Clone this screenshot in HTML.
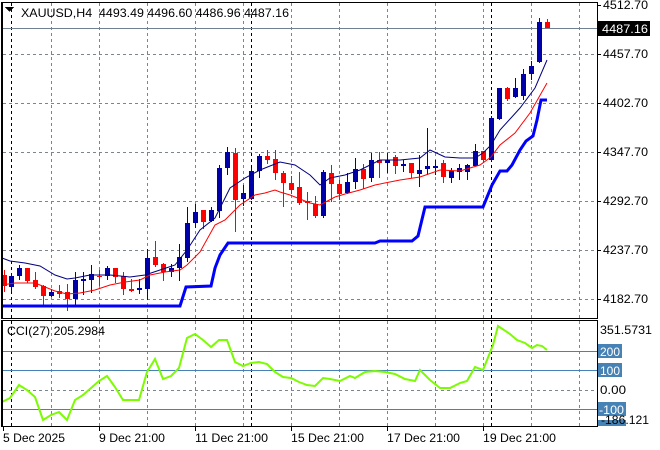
<!DOCTYPE html>
<html><head><meta charset="utf-8"><style>
body{margin:0;width:660px;height:450px;background:#fff;overflow:hidden;font-family:"Liberation Sans",sans-serif}
svg{position:absolute;left:0;top:0}
text{font-family:"Liberation Sans",sans-serif;font-size:12px;fill:#000}
</style></head><body>
<svg id="s" width="660" height="450" xmlns="http://www.w3.org/2000/svg" shape-rendering="crispEdges">
<g id="grid" stroke="#7a8590" stroke-dasharray="3,3" stroke-width="1"></g>
<g stroke="#000" stroke-dasharray="3,3">
<line x1="11.5" y1="3" x2="11.5" y2="426"/><line x1="251.5" y1="3" x2="251.5" y2="426"/><line x1="491.5" y1="3" x2="491.5" y2="426"/>
</g>
<line x1="2" y1="28.5" x2="597" y2="28.5" stroke="#708090"/>
<g stroke="#4682b4"><line x1="2" y1="351.5" x2="597" y2="351.5"/><line x1="2" y1="370.5" x2="597" y2="370.5"/><line x1="2" y1="409.5" x2="597" y2="409.5"/></g>
<g id="c"></g>
<g shape-rendering="auto" fill="none">
<polyline stroke="#000080" stroke-width="1" points="2,258 10,261 25,263 40,266 55,275 67,279 75,278 90,275 110,275 130,277 145,275 160,270 175,265 187,250 200,230 215,218 230,188 245,178 260,170 280,162 295,165 310,175 320,185 330,178 345,175 360,170 380,160 400,160 420,158 430,150 445,157 460,158 475,158 483,153 491,145 500,130 520,108 535,88 547,60"/>
<polyline stroke="#ff0000" stroke-width="1" points="2,285 15,283 35,283 55,291 67,294 80,293 95,290 110,285 125,282 140,280 150,275 165,272 180,270 187,265 200,252 215,225 225,220 240,205 255,195 265,193 275,190 280,192 290,195 310,203 320,205 335,197 345,194 360,190 375,185 400,180 420,177 440,170 460,171 480,165 491,157 500,145 515,133 530,113 547,83"/>
<polyline stroke="#0000ff" stroke-width="3" points="2,306 180,306 186,287 211,286 215,268 220,255 228,243 375,243 380,241 412,241 418,236 425,207 483,207 492,185 500,171 507,171 512,165 520,150 526,141 533,136 537,120 541,100 547,100"/>
<polyline stroke="#7cfc00" stroke-width="2" points="2,402 10,398 19,385 27,390 35,397 43,420 51,415 59,412 67,420 75,400 83,395 91,388 99,381 107,376 115,387 123,400 131,400 139,400 147,372 155,359 163,379 171,376 179,368 187,338 195,334 203,340 211,347 219,340 227,340 235,362 243,366 251,363 259,362 267,364 275,372 283,377 291,378 299,382 307,385 315,386 323,378 330,379 340,381 350,376 355,378 365,372 375,371 385,372 395,374 405,379 415,381 420,370 430,380 440,388 450,388 460,383 467,381 475,367 483,370 493,345 498,326 510,334 517,340 525,343 532,348 537,345 542,346 547,350"/>
</g>
<g stroke="#000" fill="none">
<rect x="2.5" y="2.5" width="595" height="316" stroke-width="1"/>
<line x1="2" y1="2" x2="2" y2="319" stroke-width="2"/>
<rect x="2.5" y="320.5" width="595" height="106"/>
<line x1="2" y1="320" x2="2" y2="427" stroke-width="2"/>
</g>
<g id="ticks" stroke="#000"></g>
<path d="M5 7 L14 7 L9.5 12 Z" fill="#000"/>
<text x="21" y="17" textLength="268" lengthAdjust="spacingAndGlyphs" xml:space="preserve">XAUUSD,H4  4493.49 4496.60 4486.96 4487.16</text>
<text x="7" y="335" textLength="98" lengthAdjust="spacingAndGlyphs">CCI(27) 205.2984</text>
<g id="lab"></g>
<rect x="598" y="21" width="52" height="15" fill="#000"/>
<text x="602" y="33" style="fill:#fff" textLength="46" lengthAdjust="spacingAndGlyphs">4487.16</text>
<text x="600" y="334" textLength="52" lengthAdjust="spacingAndGlyphs">351.5731</text>
<rect x="598" y="344" width="24" height="14" fill="#4682b4"/><text x="600" y="356" style="fill:#fff" textLength="20" lengthAdjust="spacingAndGlyphs">200</text>
<rect x="598" y="363" width="24" height="14" fill="#4682b4"/><text x="600" y="375" style="fill:#fff" textLength="20" lengthAdjust="spacingAndGlyphs">100</text>
<text x="600" y="394" textLength="26" lengthAdjust="spacingAndGlyphs">0.00</text>
<rect x="598" y="420" width="28" height="6" fill="#4682b4"/>
<rect x="598" y="402" width="28" height="14" fill="#4682b4"/><text x="599" y="414" style="fill:#fff" textLength="25" lengthAdjust="spacingAndGlyphs">-100</text>
<text x="601" y="424" textLength="48" lengthAdjust="spacingAndGlyphs">-186.121</text>
<text x="3" y="442" textLength="62" lengthAdjust="spacingAndGlyphs">5 Dec 2025</text>
<text x="99" y="442" textLength="66" lengthAdjust="spacingAndGlyphs">9 Dec 21:00</text>
<text x="195" y="442" textLength="73" lengthAdjust="spacingAndGlyphs">11 Dec 21:00</text>
<text x="291" y="442" textLength="73" lengthAdjust="spacingAndGlyphs">15 Dec 21:00</text>
<text x="387" y="442" textLength="73" lengthAdjust="spacingAndGlyphs">17 Dec 21:00</text>
<text x="483" y="442" textLength="73" lengthAdjust="spacingAndGlyphs">19 Dec 21:00</text>
</svg>
<script>
var ns="http://www.w3.org/2000/svg";
function el(p,t,a){var e=document.createElementNS(ns,t);for(var k in a)e.setAttribute(k,a[k]);p.appendChild(e);return e;}
var g=document.getElementById('grid');
[51,99,147,195,243,291,339,387,435,483,531,579].forEach(function(x){el(g,'line',{x1:x+.5,y1:3,x2:x+.5,y2:318});el(g,'line',{x1:x+.5,y1:321,x2:x+.5,y2:426});});
[54,103,152,201,250,299].forEach(function(y){el(g,'line',{x1:3,y1:y+.5,x2:597,y2:y+.5});});
el(g,'line',{x1:3,y1:390.5,x2:597,y2:390.5});
var t=document.getElementById('ticks'),L=document.getElementById('lab');
var pr=[[5,'4512.70'],[54,'4457.70'],[103,'4402.70'],[152,'4347.70'],[201,'4292.70'],[250,'4237.70'],[299,'4182.70']];
pr.forEach(function(p){el(t,'line',{x1:597,y1:p[0]+.5,x2:601,y2:p[0]+.5});var tx=el(L,'text',{x:603,y:p[0]+4,textLength:45,lengthAdjust:'spacingAndGlyphs'});tx.textContent=p[1];});
[3,99,195,291,387,483].forEach(function(x){el(t,'line',{x1:x+.5,y1:427,x2:x+.5,y2:431});});
var C=[[4,275,286,270,292,0],[11,276,287,273,292,1],[19,268,276,265,280,1],[27,268,281,268,283,0],[35,280,287,272,289,0],[43,286,296,285,305,0],[51,292,296,289,297,1],[59,291,294,285,298,0],[67,292,299,284,311,0],[75,280,299,272,305,1],[83,279,281,272,295,1],[91,274,280,265,293,1],[99,276,277,270,286,0],[107,268,276,266,280,1],[115,268,277,268,283,0],[123,276,289,272,295,0],[131,289,291,279,292,0],[139,288,290,279,294,1],[147,258,289,249,300,1],[155,257,265,241,267,0],[163,264,272,263,281,0],[171,268,272,264,277,1],[179,257,268,244,281,1],[187,223,258,207,262,1],[195,212,223,204,228,1],[203,210,222,210,229,0],[211,210,221,207,222,1],[219,168,211,165,218,1],[227,152,168,147,175,1],[235,153,200,148,232,0],[243,193,199,185,206,1],[251,171,199,168,200,1],[259,156,171,154,178,1],[267,156,160,150,164,0],[275,159,173,150,180,0],[283,173,183,171,207,0],[291,183,190,176,194,0],[299,187,203,172,205,0],[307,201,203,192,220,0],[315,204,216,196,218,0],[323,172,216,170,218,1],[331,173,184,165,202,0],[339,184,194,180,200,0],[347,182,193,173,194,1],[355,169,182,158,189,1],[363,169,179,164,189,0],[371,160,178,153,182,1],[379,160,163,152,178,0],[387,160,163,153,173,1],[395,157,166,155,174,0],[403,164,166,160,172,1],[411,163,173,163,178,0],[419,170,174,155,187,1],[427,166,169,128,175,1],[435,166,168,160,175,1],[443,163,177,160,183,0],[451,171,178,168,183,1],[459,168,172,164,180,1],[467,165,172,164,180,1],[475,151,166,144,166,1],[483,151,160,151,163,0],[491,118,160,116,161,1],[499,88,119,88,120,1],[507,88,99,87,101,0],[515,88,97,78,98,1],[523,74,96,69,100,1],[531,66,74,61,80,1],[539,22,62,18,63,1],[547,22,28,19,28,0]];
var cg=document.getElementById('c');
C.forEach(function(c){var col=c[5]?'#0000a8':'#ff0000';
el(cg,'rect',{x:c[0],y:c[3],width:1,height:c[4]-c[3],fill:col});
el(cg,'rect',{x:c[0]-2,y:c[1],width:5,height:Math.max(1,c[2]-c[1]),fill:col});});
</script>
</body></html>
